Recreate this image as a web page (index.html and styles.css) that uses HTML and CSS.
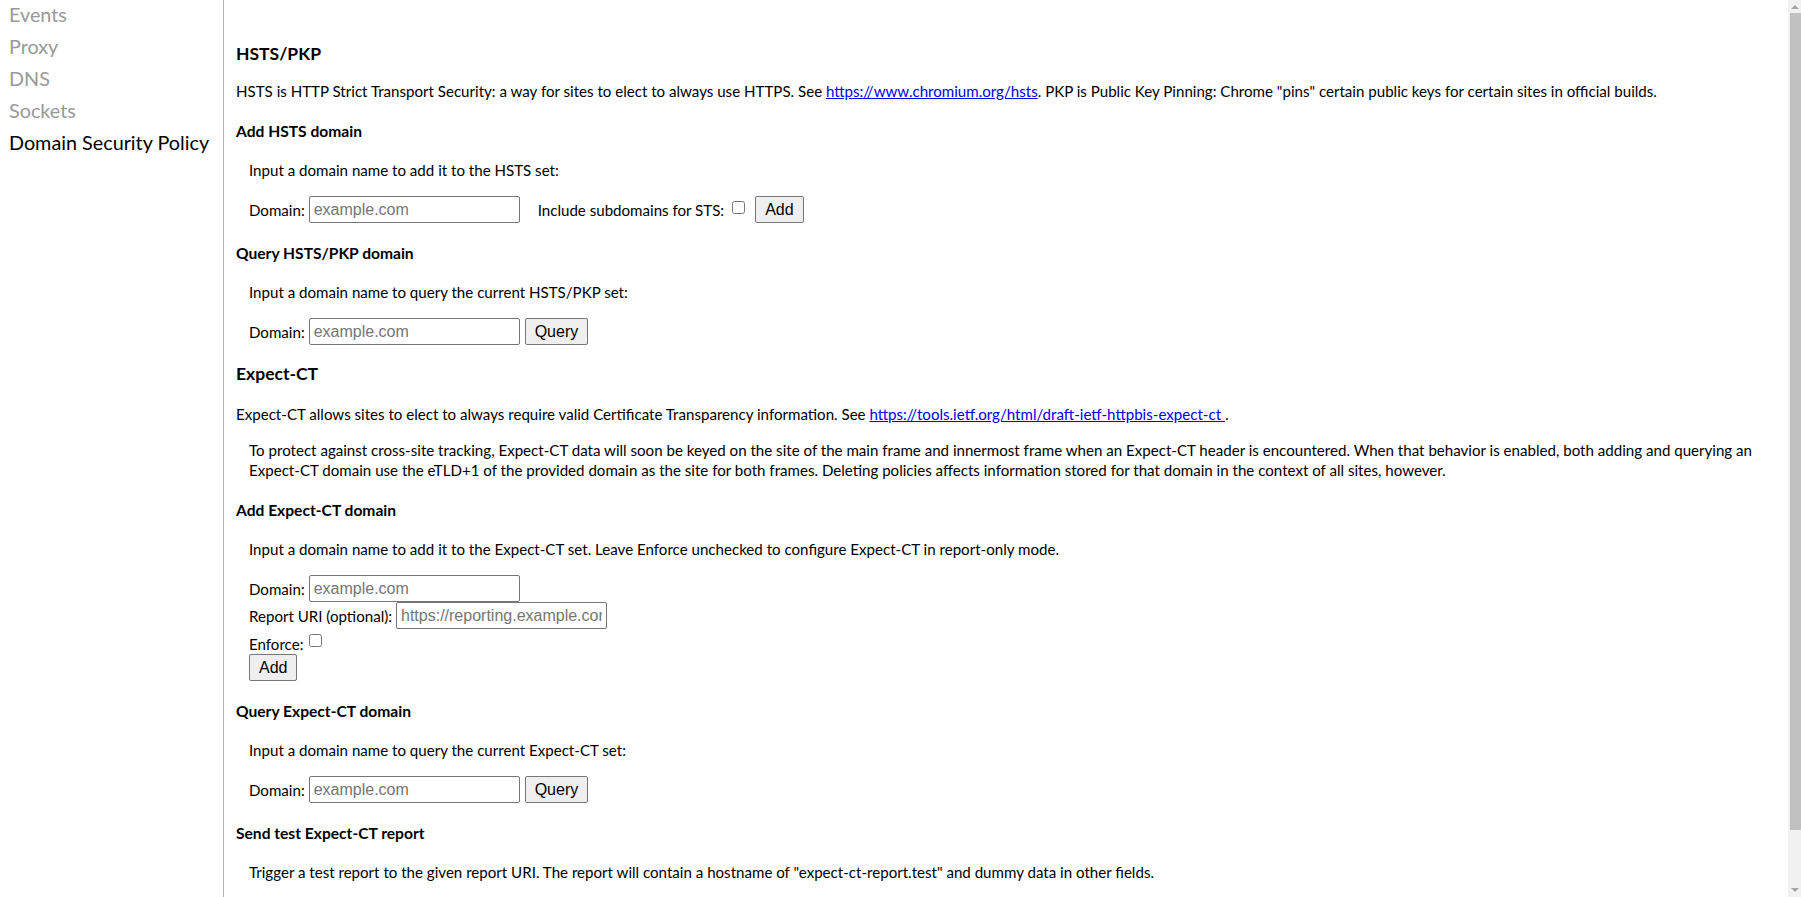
FILE: index.html
```html
<!DOCTYPE html>
<html lang="en">
<head>
  <meta charset="UTF-8" />
  <title>net-internals</title>
  <link rel="stylesheet" href="styles.css">
</head>
<body>
  <div class="sidebar">
    <div class="tabs">
      <div class="tab">Events</div>
      <div class="tab">Proxy</div>
      <div class="tab">DNS</div>
      <div class="tab">Sockets</div>
      <div class="tab selected">Domain Security Policy</div>
    </div>
  </div>

  <div class="content">
    <h2 class="first">HSTS/PKP</h2>
    <p>HSTS is HTTP Strict Transport Security: a way for sites to elect to always use HTTPS. See <a href="#">https://www.chromium.org/hsts</a>. PKP is Public Key Pinning: Chrome "pins" certain public keys for certain sites in official builds.</p>

    <h4>Add HSTS domain</h4>
    <form class="box">
      <p>Input a domain name to add it to the HSTS set:</p>
      <div class="row">
        <label class="field">Domain: <input type="text" placeholder="example.com"></label>
        <label class="field sts-check">Include subdomains for STS: <input type="checkbox"></label>
        <button type="button" class="add-btn">Add</button>
      </div>
    </form>

    <h4>Query HSTS/PKP domain</h4>
    <form class="box">
      <p>Input a domain name to query the current HSTS/PKP set:</p>
      <div class="row">
        <label class="field">Domain: <input type="text" placeholder="example.com"></label>
        <button type="button">Query</button>
      </div>
    </form>

    <h2>Expect-CT</h2>
    <p>Expect-CT allows sites to elect to always require valid Certificate Transparency information. See <a href="#">https://tools.ietf.org/html/draft-ietf-httpbis-expect-ct </a>.</p>
    <p class="box note">To protect against cross-site tracking, Expect-CT data will soon be keyed on the site of the main frame and innermost frame when an Expect-CT header is encountered. When that behavior is enabled, both adding and querying an Expect-CT domain use the eTLD+1 of the provided domain as the site for both frames. Deleting policies affects information stored for that domain in the context of all sites, however.</p>

    <h4>Add Expect-CT domain</h4>
    <form class="box">
      <p>Input a domain name to add it to the Expect-CT set. Leave Enforce unchecked to configure Expect-CT in report-only mode.</p>
      <div class="stack">
        <label class="field">Domain: <input type="text" placeholder="example.com"></label>
        <label class="field">Report URI (optional): <input type="text" placeholder="https://reporting.example.com"></label>
        <label class="enforce">Enforce: <input type="checkbox"></label>
        <button type="button">Add</button>
      </div>
    </form>

    <h4>Query Expect-CT domain</h4>
    <form class="box">
      <p>Input a domain name to query the current Expect-CT set:</p>
      <div class="row">
        <label class="field">Domain: <input type="text" placeholder="example.com"></label>
        <button type="button">Query</button>
      </div>
    </form>

    <h4>Send test Expect-CT report</h4>
    <form class="box">
      <p>Trigger a test report to the given report URI. The report will contain a hostname of "expect-ct-report.test" and dummy data in other fields.</p>
    </form>
  </div>

  <!-- window scrollbar, drawn since the capture hides native ones -->
  <div class="scrollbar" aria-hidden="true">
    <div class="arrow up"></div>
    <div class="thumb"></div>
    <div class="arrow down"></div>
  </div>
</body>
</html>
```

FILE: styles.css
```css
body, html {
  margin: 0;
  padding: 0;
}

body {
  display: flex;
  font-family: Lato, 'Segoe UI', sans-serif;
  font-size: 15.1px;
  color: #000;
}

.sidebar {
  width: 223px;
  flex-shrink: 0;
  border-right: 1px solid #b4b4b4;
}
.tabs { margin-top: -2px; }
.tab {
  font-size: 19.8px;
  line-height: 32px;
  padding-left: 9px;
  color: #999;
  white-space: nowrap;
}
.tab.selected { color: #000; }

.content {
  flex: 1;
  padding: 24px 27px 60px 12px;
}

h2 {
  font-size: 17.5px;
  line-height: 26px;
  margin: 16px 0 14px;
}
h2.first { margin-top: 17px; }
h2 + p { margin-top: 17px; }
h2.first + p { margin-top: 14px; }
h4 {
  font-size: 15.6px;
  line-height: 20px;
  margin: 19.5px 0;
}
p {
  line-height: 20px;
  margin: 16px 0;
}
p.note { margin-top: 15px; }
a { color: #0000ee; }

.box { margin-left: 13px; }

.row {
  display: flex;
  align-items: center;
  height: 27px;
}
.field {
  display: inline-flex;
  align-items: center;
  gap: 4px;
  white-space: nowrap;
}
.sts-check {
  margin-left: 18px;
  gap: 8px;
}
.sts-check input { margin: 0 0 4px 0; }
.row button { margin-left: 5px; }
.row .add-btn { margin-left: 10px; }

.stack {
  display: flex;
  flex-direction: column;
  align-items: flex-start;
}
.stack .field { height: 27px; }
.enforce {
  display: flex;
  align-items: flex-start;
  gap: 6px;
  height: 25px;
  box-sizing: border-box;
  padding-top: 5px;
  line-height: 20px;
}
.enforce input { margin: 0; }

input[type="text"] {
  width: 211px;
  height: 27px;
  box-sizing: border-box;
  border: 1px solid #767676;
  border-radius: 2px;
  padding: 1px 4px;
  font-family: 'Liberation Sans', Arial, sans-serif;
  font-size: 16px;
  margin: 0;
}
input::placeholder { color: #757575; }
input[type="checkbox"] {
  width: 13px;
  height: 13px;
}

button {
  height: 27px;
  box-sizing: border-box;
  border: 1px solid #767676;
  border-radius: 2px;
  background: #efefef;
  padding: 1px 9px;
  font-family: 'Liberation Sans', Arial, sans-serif;
  font-size: 16px;
  color: #000;
  margin: 0;
}

.scrollbar {
  position: fixed;
  top: 0;
  right: 0;
  width: 13px;
  height: 100vh;
  background: #f1f1f1;
  display: flex;
  flex-direction: column;
  align-items: flex-end;
}
.thumb {
  width: 11px;
  height: 817px;
  background: #c1c1c1;
}
.arrow {
  width: 0;
  height: 0;
  margin: 5px 2px 5px 0;
  border-left: 4px solid transparent;
  border-right: 4px solid transparent;
}
.arrow.up { border-bottom: 4px solid #a3a3a3; margin-bottom: 4px; }
.arrow.down { border-top: 4px solid #a3a3a3; margin-top: auto; }
```
